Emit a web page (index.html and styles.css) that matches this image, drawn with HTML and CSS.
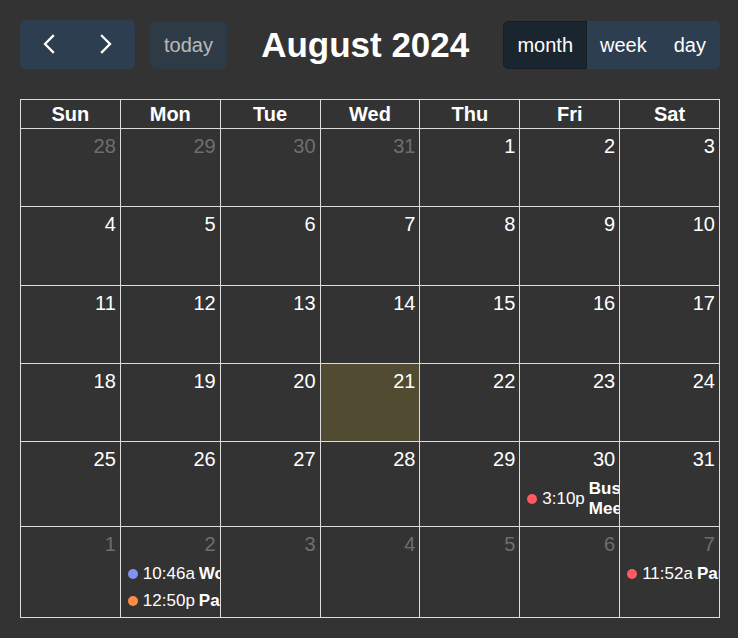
FILE: index.html
```html
<!DOCTYPE html>
<html lang="en">
<head>
<meta charset="utf-8">
<title>August 2024</title>
<link rel="stylesheet" href="styles.css">
</head>
<body>
<div class="toolbar">
  <div class="chunk">
    <div class="btn-group">
      <button class="btn icon-btn" aria-label="prev"><svg viewBox="0 0 30 30" width="30" height="30"><polyline points="19,7 11,15 19,23" fill="none" stroke="#fff" stroke-width="2.3" stroke-linecap="square"/></svg></button>
      <button class="btn icon-btn" aria-label="next"><svg viewBox="0 0 30 30" width="30" height="30"><polyline points="11,7 19,15 11,23" fill="none" stroke="#fff" stroke-width="2.3" stroke-linecap="square"/></svg></button>
    </div>
    <button class="btn today">today</button>
  </div>
  <h2 class="title">August 2024</h2>
  <div class="btn-group">
    <button class="btn active">month</button>
    <button class="btn">week</button>
    <button class="btn">day</button>
  </div>
</div>

<div class="cal">
  <div class="hd">Sun</div><div class="hd">Mon</div><div class="hd">Tue</div><div class="hd">Wed</div><div class="hd">Thu</div><div class="hd">Fri</div><div class="hd">Sat</div>

  <div class="day other"><div class="num">28</div></div>
  <div class="day other"><div class="num">29</div></div>
  <div class="day other"><div class="num">30</div></div>
  <div class="day other"><div class="num">31</div></div>
  <div class="day"><div class="num">1</div></div>
  <div class="day"><div class="num">2</div></div>
  <div class="day"><div class="num">3</div></div>

  <div class="day"><div class="num">4</div></div>
  <div class="day"><div class="num">5</div></div>
  <div class="day"><div class="num">6</div></div>
  <div class="day"><div class="num">7</div></div>
  <div class="day"><div class="num">8</div></div>
  <div class="day"><div class="num">9</div></div>
  <div class="day"><div class="num">10</div></div>

  <div class="day"><div class="num">11</div></div>
  <div class="day"><div class="num">12</div></div>
  <div class="day"><div class="num">13</div></div>
  <div class="day"><div class="num">14</div></div>
  <div class="day"><div class="num">15</div></div>
  <div class="day"><div class="num">16</div></div>
  <div class="day"><div class="num">17</div></div>

  <div class="day"><div class="num">18</div></div>
  <div class="day"><div class="num">19</div></div>
  <div class="day"><div class="num">20</div></div>
  <div class="day today-cell"><div class="num">21</div></div>
  <div class="day"><div class="num">22</div></div>
  <div class="day"><div class="num">23</div></div>
  <div class="day"><div class="num">24</div></div>

  <div class="day"><div class="num">25</div></div>
  <div class="day"><div class="num">26</div></div>
  <div class="day"><div class="num">27</div></div>
  <div class="day"><div class="num">28</div></div>
  <div class="day"><div class="num">29</div></div>
  <div class="day"><div class="num">30</div>
    <div class="events">
      <div class="ev"><span class="dot red"></span><span class="time">3:10p</span><span class="ev-title">Business Meeting</span></div>
    </div>
  </div>
  <div class="day"><div class="num">31</div></div>

  <div class="day other"><div class="num">1</div></div>
  <div class="day other"><div class="num">2</div>
    <div class="events">
      <div class="ev"><span class="dot blue"></span><span class="time">10:46a</span><span class="ev-title">Workout</span></div>
      <div class="ev"><span class="dot orange"></span><span class="time">12:50p</span><span class="ev-title">Party</span></div>
    </div>
  </div>
  <div class="day other"><div class="num">3</div></div>
  <div class="day other"><div class="num">4</div></div>
  <div class="day other"><div class="num">5</div></div>
  <div class="day other"><div class="num">6</div></div>
  <div class="day other"><div class="num">7</div>
    <div class="events">
      <div class="ev"><span class="dot red"></span><span class="time">11:52a</span><span class="ev-title">Party</span></div>
    </div>
  </div>
</div>
</body>
</html>
```

FILE: styles.css
```css
* { box-sizing: border-box; }

body {
  margin: 0;
  padding: 20px 18px 0 20px;
  background: #333333;
  color: #ffffff;
  font-family: "Liberation Sans", Arial, sans-serif;
  font-size: 20px;
}

.toolbar {
  display: flex;
  justify-content: space-between;
  align-items: center;
  height: 49px;
  margin-bottom: 30px;
}

.chunk {
  display: flex;
  align-items: center;
  gap: 15px;
}

.btn {
  font: inherit;
  color: #ffffff;
  background: #2c3e50;
  border: 1px solid #2c3e50;
  border-radius: 5px;
  padding: 8px 13px;
  line-height: 30px;
  margin: 0;
  cursor: pointer;
}

.icon-btn {
  padding: 8px 13px 9px;
}

.icon-btn svg {
  display: block;
}

.btn-group {
  display: flex;
}

.btn-group .btn + .btn {
  margin-left: -1px;
  border-top-left-radius: 0;
  border-bottom-left-radius: 0;
}

.btn-group .btn:not(:last-child) {
  border-top-right-radius: 0;
  border-bottom-right-radius: 0;
}

.btn.active {
  background: #1a252f;
  border-color: #151e27;
  position: relative;
  z-index: 1;
}

.today {
  opacity: 0.65;
}

.title {
  margin: 0;
  font-size: 35px;
  font-weight: bold;
  line-height: 1.2;
  color: #ffffff;
}

.cal {
  width: 700px;
  display: grid;
  grid-template-columns: repeat(7, 1fr);
  grid-template-rows: 29px 78px 79px 78px 78px 85px 91px;
  border-top: 1px solid #dddddd;
  border-left: 1px solid #dddddd;
}

.hd {
  border-right: 1px solid #dddddd;
  border-bottom: 1px solid #dddddd;
  display: flex;
  align-items: center;
  justify-content: center;
  font-weight: bold;
  padding: 0 4px;
}

.day {
  border-right: 1px solid #dddddd;
  border-bottom: 1px solid #dddddd;
  min-width: 0;
}

.today-cell {
  background: rgba(255, 220, 40, 0.15);
}

.num {
  text-align: right;
  padding: 4px;
  line-height: 26px;
}

.other .num {
  color: rgba(255, 255, 255, 0.3);
}

.events {
  display: flex;
  flex-direction: column;
  gap: 3px;
  margin-top: 1px;
}

.ev {
  display: flex;
  align-items: center;
  margin-left: 2px;
  padding: 2px 0;
  font-size: 17px;
  line-height: 20px;
  color: #ffffff;
}

.dot {
  flex: none;
  width: 10px;
  height: 10px;
  border-radius: 50%;
  margin: 0 5px;
}

.dot.red { background: #ff5a5f; }
.dot.blue { background: #8093f1; }
.dot.orange { background: #ff8c42; }

.time {
  flex: none;
  white-space: nowrap;
  margin-right: 4px;
}

.ev-title {
  font-weight: bold;
  overflow: hidden;
  min-width: 0;
}
```
